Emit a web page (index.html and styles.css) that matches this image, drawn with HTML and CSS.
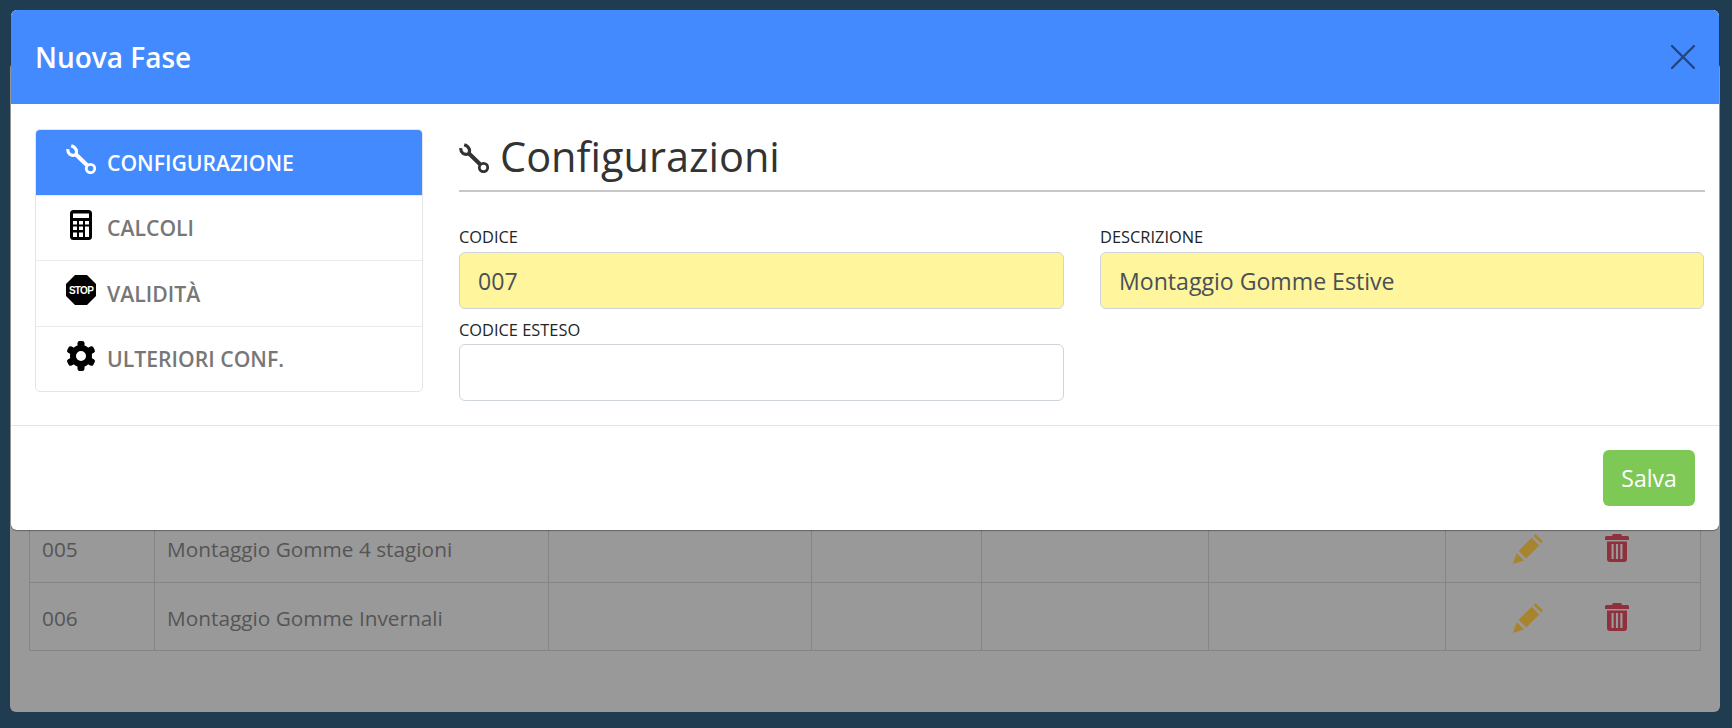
FILE: index.html
```html
<!DOCTYPE html>
<html lang="it">
<head>
<meta charset="utf-8">
<title>Nuova Fase</title>
<link rel="stylesheet" href="styles.css">
</head>
<body>
<main class="card">
  <table class="grid">
    <colgroup>
      <col class="c1"><col class="c2"><col class="c3"><col class="c4"><col class="c5"><col class="c6"><col class="c7">
    </colgroup>
    <tr>
      <td>005</td><td>Montaggio Gomme 4 stagioni</td><td></td><td></td><td></td><td></td>
      <td><div class="actions">
        <svg class="pencil" viewBox="0 0 30 30"><path d="M0 30 3.6 19 11 26.4Z"/><path d="M5.6 16.8 18.6 3.8 26.2 11.4 13.2 24.4Z"/><path d="M20.4 2 22.4 0 30 7.6 28 9.6Z"/></svg>
        <svg class="trash" viewBox="0 0 24 28"><path d="M9 0h6a2 2 0 0 1 2 2h5.500A1.500 1.500 0 0 1 24 3.500V6H0V3.500A1.500 1.500 0 0 1 1.500 2H7a2 2 0 0 1 2-2Z"/><path fill-rule="evenodd" d="M2 7.500h20V25a3 3 0 0 1-3 3H5a3 3 0 0 1-3-3ZM6.500 10v15h2.200V10Zm4.400 0v15h2.200V10Zm4.400 0v15h2.200V10Z"/></svg>
      </div></td>
    </tr>
    <tr>
      <td>006</td><td>Montaggio Gomme Invernali</td><td></td><td></td><td></td><td></td>
      <td><div class="actions">
        <svg class="pencil" viewBox="0 0 30 30"><path d="M0 30 3.6 19 11 26.4Z"/><path d="M5.6 16.8 18.6 3.8 26.2 11.4 13.2 24.4Z"/><path d="M20.4 2 22.4 0 30 7.6 28 9.6Z"/></svg>
        <svg class="trash" viewBox="0 0 24 28"><path d="M9 0h6a2 2 0 0 1 2 2h5.500A1.500 1.500 0 0 1 24 3.500V6H0V3.500A1.500 1.500 0 0 1 1.500 2H7a2 2 0 0 1 2-2Z"/><path fill-rule="evenodd" d="M2 7.500h20V25a3 3 0 0 1-3 3H5a3 3 0 0 1-3-3ZM6.500 10v15h2.200V10Zm4.400 0v15h2.200V10Zm4.400 0v15h2.200V10Z"/></svg>
      </div></td>
    </tr>
  </table>
</main>

<section class="modal">
  <header class="modal-head">
    <h2>Nuova Fase</h2>
    <svg class="close" viewBox="0 0 24 24"><path d="M1 1 23 23M23 1 1 23"/></svg>
  </header>
  <div class="modal-body">
    <nav class="side">
      <a class="item active">
        <svg class="ico wrench" viewBox="0 0 30 30"><path class="jaw" d="M1.800 5.200C1.500 9.800 5 12.300 9.300 11 11.800 8 10.500 3.500 5.200 1.800"/><path class="shaft" d="M9 9.500 20.800 21"/><circle class="ring" cx="24.500" cy="24.500" r="4.200"/></svg>
        <span>Configurazione</span>
      </a>
      <a class="item">
        <svg class="ico" viewBox="0 0 30 30"><path fill-rule="evenodd" d="M7.500 0h15A3.500 3.500 0 0 1 26 3.500v23a3.500 3.500 0 0 1-3.500 3.500h-15A3.500 3.500 0 0 1 4 26.500v-23A3.500 3.500 0 0 1 7.500 0ZM7 3.500V8h16V3.500ZM7 11v3.500h4V11Zm6 0v3.500h4V11Zm6 0v3.500h4V11ZM7 16.500V20h4v-3.500Zm6 0V20h4v-3.500Zm6 0V27h4V16.500ZM7 22.500V27h4v-4.500Zm6 0V27h4v-4.500Z"/></svg>
        <span>Calcoli</span>
      </a>
      <a class="item">
        <svg class="ico" viewBox="0 0 30 30"><path d="M9 0h12l9 9v12l-9 9H9l-9-9V9Z"/><text class="stop" x="15" y="18.500" text-anchor="middle">STOP</text></svg>
        <span>Validità</span>
      </a>
      <a class="item">
        <svg class="ico" viewBox="0 0 30 30">
          <circle class="gear-ring" cx="15" cy="15" r="8"/>
          <rect class="tooth" x="11.500" y="0" width="7" height="7" rx="2.200"/>
          <rect class="tooth" x="11.500" y="0" width="7" height="7" rx="2.200" transform="rotate(60 15 15)"/>
          <rect class="tooth" x="11.500" y="0" width="7" height="7" rx="2.200" transform="rotate(120 15 15)"/>
          <rect class="tooth" x="11.500" y="0" width="7" height="7" rx="2.200" transform="rotate(180 15 15)"/>
          <rect class="tooth" x="11.500" y="0" width="7" height="7" rx="2.200" transform="rotate(240 15 15)"/>
          <rect class="tooth" x="11.500" y="0" width="7" height="7" rx="2.200" transform="rotate(300 15 15)"/>
        </svg>
        <span>Ulteriori conf.</span>
      </a>
    </nav>
    <div class="content">
      <h1 class="title">
        <svg class="title-ico wrench" viewBox="0 0 30 30"><path class="jaw" d="M1.800 5.200C1.500 9.800 5 12.300 9.300 11 11.800 8 10.500 3.500 5.200 1.800"/><path class="shaft" d="M9 9.500 20.800 21"/><circle class="ring" cx="24.500" cy="24.500" r="4.200"/></svg>
        Configurazioni
      </h1>
      <div class="fields">
        <label class="field">Codice<input class="input required" value="007"></label>
        <label class="field">Descrizione<input class="input required" value="Montaggio Gomme Estive"></label>
        <label class="field">Codice esteso<input class="input"></label>
      </div>
    </div>
  </div>
  <footer class="modal-foot"><button class="save">Salva</button></footer>
</section>
</body>
</html>
```
FILE: styles.css
```css
* { box-sizing: border-box; }
html, body { height: 100%; }
body {
  margin: 0;
  background: #203c50;
  font-family: "Open Sans", "Noto Sans", sans-serif;
  padding: 62px 12px 16px 10px;
  overflow: hidden;
  position: relative;
}
.card {
  height: 650px;
  background: #999;
  border-radius: 6px;
  padding: 452px 19px 0 19px;
}
.grid {
  border-collapse: collapse;
  table-layout: fixed;
  width: 1672px;
  font-size: 20.800px;
  color: #555;
}
.grid td {
  border: 1px solid #858585;
  border-top: 0;
  height: 68px;
  padding: 2px 12px 0;
}
.grid tr:last-child td { padding-top: 4px; }
.c1 { width: 125px; }
.c2 { width: 394px; }
.c3 { width: 263px; }
.c4 { width: 170px; }
.c5 { width: 227px; }
.c6 { width: 237px; }
.actions { display: flex; align-items: center; gap: 62px; padding-left: 55px; }
.pencil { width: 30px; height: 30px; fill: #a8842f; flex: none; }
.trash { width: 24px; height: 28px; fill: #8f303c; flex: none; margin-bottom: 2px; }

.modal {
  position: absolute;
  left: 11px;
  top: 10px;
  width: 1708px;
  background: #fff;
  border-radius: 6px;
  box-shadow: 0 1px 1px rgba(0,0,0,.35);
  overflow: hidden;
}
.modal-head {
  height: 94px;
  background: #448aff;
  display: flex;
  align-items: center;
  justify-content: space-between;
  padding: 0 24px;
}
.modal-head h2 {
  margin: 0;
  color: #fff;
  font-size: 28px;
  font-weight: 600;
}
.close {
  width: 24px;
  height: 24px;
  fill: none;
  stroke: #224580;
  stroke-width: 2.400;
  stroke-linecap: round;
}
.modal-body {
  display: flex;
  gap: 36px;
  padding: 25px 14px 24px 24px;
  height: 322px;
  border-bottom: 1px solid #e3e3ea;
}
.side {
  width: 388px;
  height: 263px;
  border: 1px solid #e2e6ea;
  border-radius: 5px;
  display: flex;
  flex-direction: column;
  flex: none;
  overflow: hidden;
}
.item {
  flex: 1;
  display: flex;
  align-items: center;
  gap: 11px;
  padding-left: 30px;
  font-size: 21.200px;
  font-weight: 600;
  text-transform: uppercase;
  color: #777;
  border-top: 1px solid #e9ecef;
}
.item:first-child { border-top: 0; }
.item.active { background: #448aff; color: #fff; }
.ico { width: 30px; height: 30px; flex: none; fill: #000; margin-bottom: 6px; }
.active .ico { fill: #fff; }
.wrench { fill: none; stroke: #333; stroke-linecap: butt; }
.active .wrench { fill: none; stroke: #fff; }
.jaw { stroke-width: 3.200; }
.shaft { stroke-width: 4; }
.ring { stroke-width: 2.800; }
.gear-ring { fill: none; stroke: #000; stroke-width: 6; }
.stop { fill: #fff; font: 700 10px "Liberation Sans", sans-serif; letter-spacing: -.7px; }
.content { flex: 1; min-width: 0; }
.title {
  margin: 0;
  height: 63px;
  display: flex;
  align-items: center;
  gap: 11px;
  padding-bottom: 8px;
  border-bottom: 2px solid #c8c8c8;
  font-size: 41.500px;
  font-weight: 500;
  color: #333;
}
.title-ico { width: 30px; height: 30px; margin-top: 4px; flex: none; }
.fields {
  display: grid;
  grid-template-columns: 605px 604px;
  column-gap: 36px;
  row-gap: 11px;
  padding-top: 35px;
}
.field {
  display: flex;
  flex-direction: column;
  gap: 5px;
  font-size: 16.400px;
  line-height: 20px;
  text-transform: uppercase;
  color: #212529;
}
.field:nth-child(3) { gap: 4px; }
.input {
  height: 57px;
  border: 1px solid #ced4da;
  border-radius: 6px;
  padding: 0 18px;
  font: 23.100px "Open Sans", sans-serif;
  color: #495057;
  background: #fff;
  width: 100%;
}
.input.required { background: #fff59d; }
.modal-foot {
  height: 104px;
  display: flex;
  justify-content: flex-end;
  align-items: flex-start;
  padding: 24px 24px 0 0;
}
.save {
  width: 92px;
  height: 56px;
  background: #7ec855;
  border: 0;
  border-radius: 6px;
  color: #fff;
  font: 23px "Open Sans", sans-serif;
}
```
